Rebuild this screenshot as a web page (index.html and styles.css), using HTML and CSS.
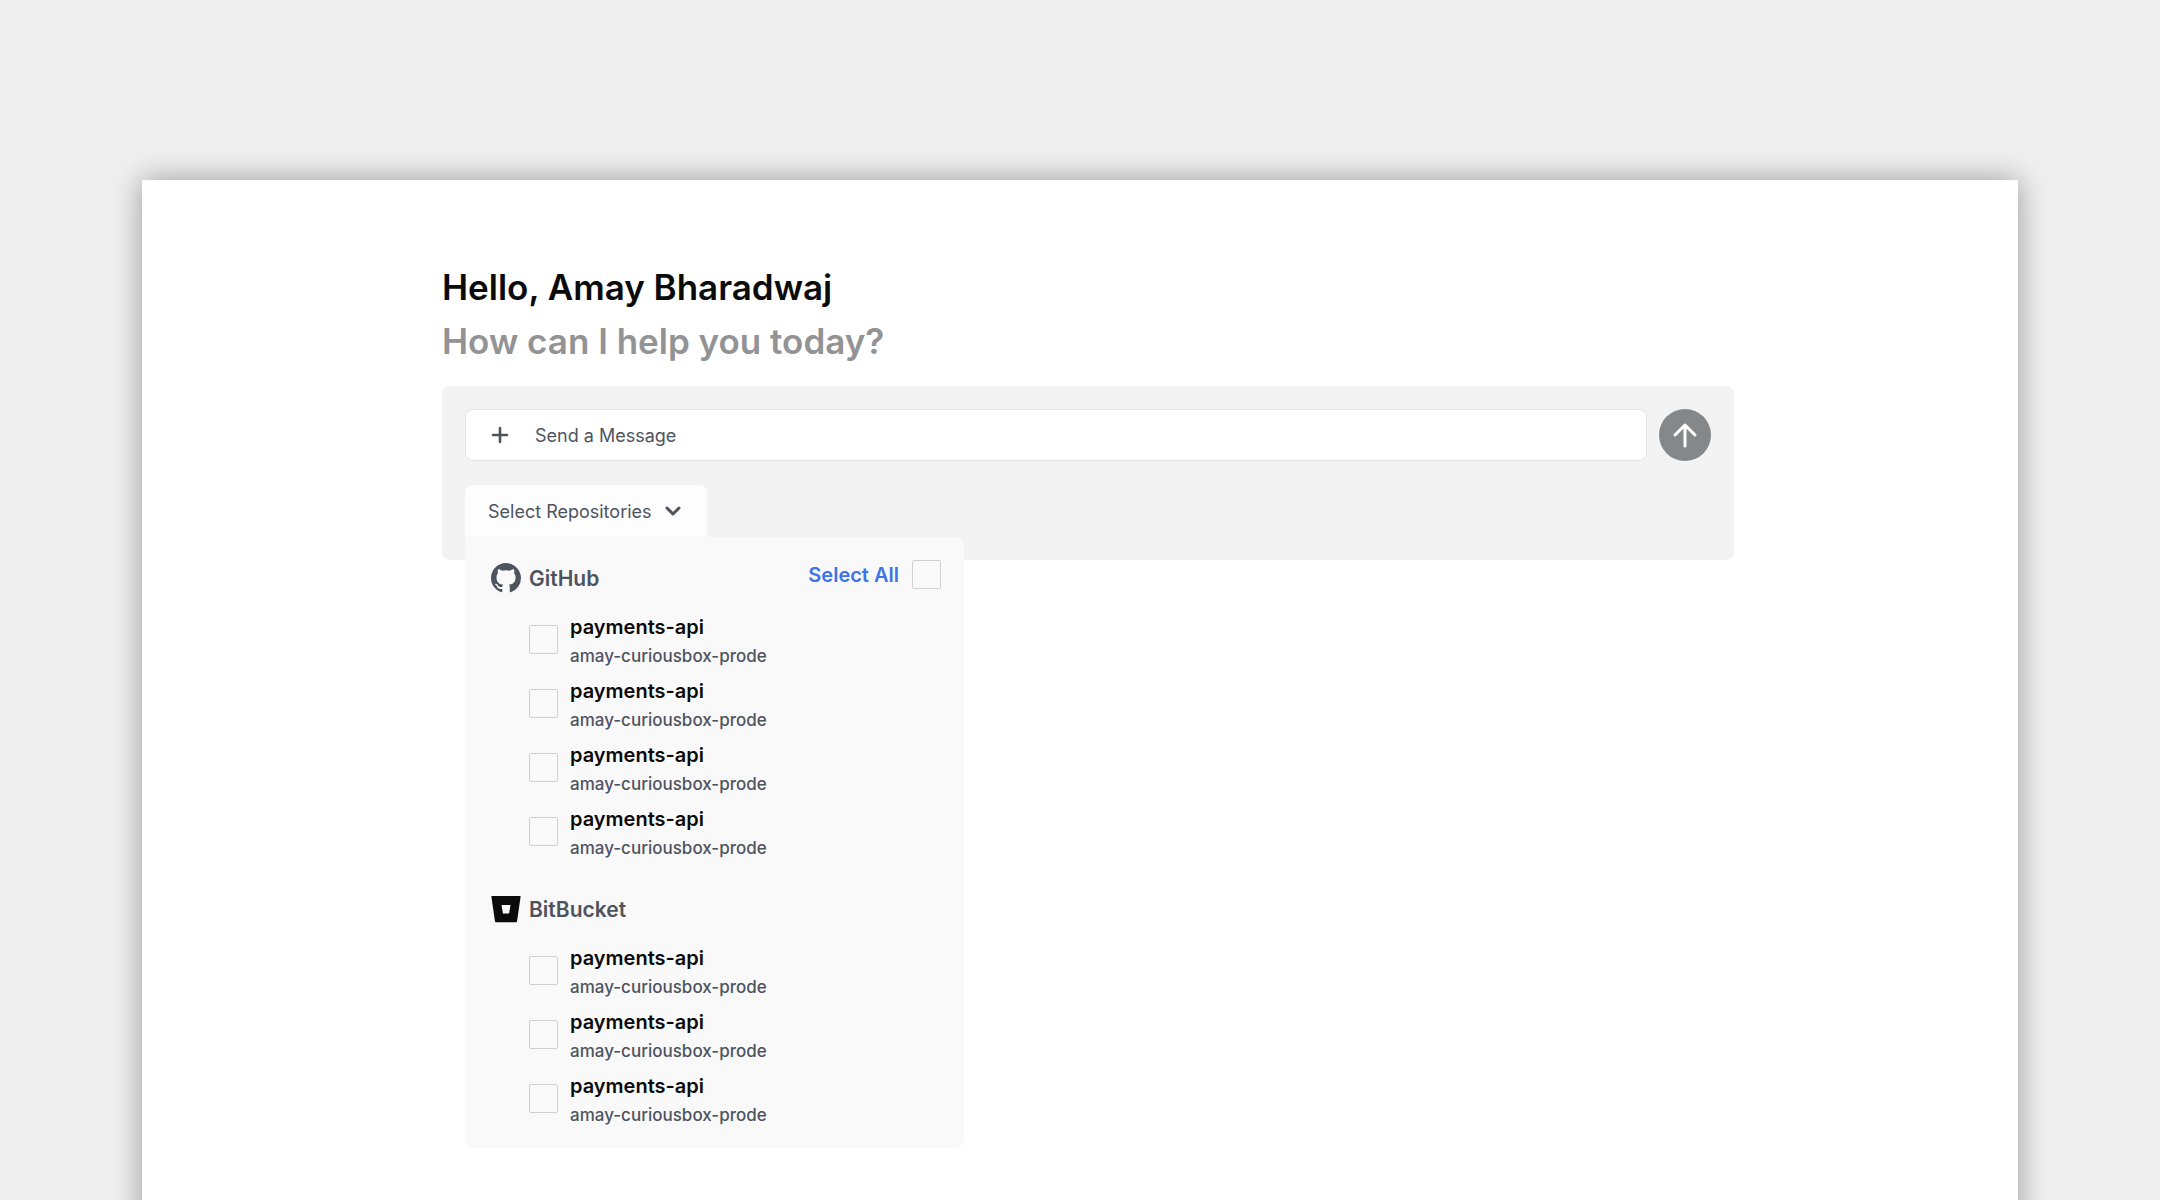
FILE: index.html
```
<!DOCTYPE html>
<html lang="en">
<head>
    <meta charset="UTF-8">
    <meta name="viewport" content="width=device-width, initial-scale=1.0">
    <title>Chat</title>
    <link rel="stylesheet" href="styles.css">
</head>
<body>

    <div class="page">
    <main class="sheet">
        <!-- Greeting -->
        <h1 class="greeting">Hello, Amay Bharadwaj</h1>
        <p class="question">How can I help you today?</p>

        <form class="composer">
            <!-- Message row -->
            <div class="message-row">
                <div class="message-box">
                    <button class="add-button" type="button" aria-label="Add attachment">
                        <svg width="18" height="18" viewBox="0 0 18 18" fill="none" stroke="currentColor" stroke-width="2.6" stroke-linecap="round">
                            <path d="M9 2v14M2 9h14"/>
                        </svg>
                    </button>
                    <input class="message-input" type="text" placeholder="Send a Message" aria-label="Send a Message">
                </div>
                <button class="send-button" type="submit" aria-label="Send">
                    <svg width="26" height="26" viewBox="0 0 26 26" fill="none" stroke="currentColor" stroke-width="3" stroke-linecap="round" stroke-linejoin="round">
                        <path d="M13 24V3M3 13L13 3l10 10"/>
                    </svg>
                </button>
            </div>

            <!-- Repository picker -->
            <div class="picker">
                <button class="picker-toggle" type="button" aria-expanded="true" aria-controls="repo-menu">
                    Select Repositories
                    <svg width="16" height="10" viewBox="0 0 16 10" fill="none" stroke="currentColor" stroke-width="3" stroke-linecap="round" stroke-linejoin="round">
                        <path d="M2 2l6 6 6-6"/>
                    </svg>
                </button>

                <div class="repo-menu" id="repo-menu">
                    <section class="repo-group">
                        <div class="group-header">
                            <h2 class="group-name">
                                <svg width="30" height="30" viewBox="0 0 16 16" fill="currentColor">
                                    <path d="M8 0C3.580 0 0 3.580 0 8c0 3.540 2.290 6.530 5.470 7.590.4.070.55-.17.55-.38 0-.19-.01-.82-.01-1.490-2.010.37-2.530-.49-2.690-.94-.09-.23-.48-.94-.82-1.130-.28-.15-.68-.52-.01-.53.63-.01 1.080.58 1.230.82.72 1.210 1.870.87 2.330.66.07-.52.28-.87.51-1.070-1.780-.2-3.640-.89-3.640-3.950 0-.87.31-1.590.82-2.150-.08-.2-.36-1.020.08-2.120 0 0 .67-.21 2.200.82.64-.18 1.320-.27 2-.27s1.360.09 2 .27c1.530-1.040 2.200-.82 2.200-.82.44 1.100.16 1.920.08 2.120.51.56.82 1.270.82 2.150 0 3.070-1.870 3.750-3.650 3.950.29.25.54.73.54 1.480 0 1.070-.01 1.930-.01 2.200 0 .21.15.46.55.38A8.010 8.010 0 0 0 16 8c0-4.420-3.580-8-8-8z"/>
                                </svg>
                                GitHub
                            </h2>
                            <label class="select-all">Select All <input class="checkbox" type="checkbox"></label>
                        </div>
                        <div class="repo-list">
                            <label class="repo">
                                <input class="checkbox" type="checkbox">
                                <span class="repo-text"><span class="repo-name">payments-api</span><span class="repo-owner">amay-curiousbox-prode</span></span>
                            </label>
                            <label class="repo">
                                <input class="checkbox" type="checkbox">
                                <span class="repo-text"><span class="repo-name">payments-api</span><span class="repo-owner">amay-curiousbox-prode</span></span>
                            </label>
                            <label class="repo">
                                <input class="checkbox" type="checkbox">
                                <span class="repo-text"><span class="repo-name">payments-api</span><span class="repo-owner">amay-curiousbox-prode</span></span>
                            </label>
                            <label class="repo">
                                <input class="checkbox" type="checkbox">
                                <span class="repo-text"><span class="repo-name">payments-api</span><span class="repo-owner">amay-curiousbox-prode</span></span>
                            </label>
                        </div>
                    </section>

                    <section class="repo-group">
                        <div class="group-header">
                            <h2 class="group-name">
                                <svg width="30" height="30" viewBox="0 0 30 30">
                                    <path fill="#0b0b0c" fill-rule="evenodd" d="M1 2h28a.6.6 0 0 1 .6.7L26 27.400a1 1 0 0 1-1 .8H5a1 1 0 0 1-1-.8L.4 2.700A.6.6 0 0 1 1 2zm9.500 9l1.400 8.500h6.200L19.500 11z"/>
                                </svg>
                                BitBucket
                            </h2>
                        </div>
                        <div class="repo-list">
                            <label class="repo">
                                <input class="checkbox" type="checkbox">
                                <span class="repo-text"><span class="repo-name">payments-api</span><span class="repo-owner">amay-curiousbox-prode</span></span>
                            </label>
                            <label class="repo">
                                <input class="checkbox" type="checkbox">
                                <span class="repo-text"><span class="repo-name">payments-api</span><span class="repo-owner">amay-curiousbox-prode</span></span>
                            </label>
                            <label class="repo">
                                <input class="checkbox" type="checkbox">
                                <span class="repo-text"><span class="repo-name">payments-api</span><span class="repo-owner">amay-curiousbox-prode</span></span>
                            </label>
                        </div>
                    </section>
                </div>
            </div>
        </form>
    </main>
    </div>

</body>
</html>
```
FILE: styles.css
```
* {
    box-sizing: border-box;
}

body {
    margin: 0;
    background: #efefef;
    color: #4e545e;
    font-family: Inter, "Liberation Sans", sans-serif;
    font-size: 18px;
}

button,
input {
    font: inherit;
    color: inherit;
}

button {
    border: 0;
    padding: 0;
    background: none;
    cursor: pointer;
}

.page {
    min-height: 100vh;
    display: flex;
    flex-direction: column;
    overflow: hidden;
}

/* The sheet runs off the bottom edge of the page */
.sheet {
    flex: 1;
    margin: 180px 142px -40px;
    padding: 80px 284px 0 300px;
    background: #fff;
    box-shadow: 0 0 28px rgba(0, 0, 0, 0.36);
}

/* Greeting */
.greeting,
.question {
    margin: 0;
    font-size: 35px;
    font-weight: 600;
    line-height: 54px;
}

.greeting {
    color: #0b0b0c;
}

.question {
    color: #929395;
}

/* Composer */
.composer {
    margin-top: 18px;
    padding: 23px;
    display: flex;
    flex-direction: column;
    gap: 24px;
    border-radius: 8px;
    background: #f3f3f3;
}

.message-row {
    display: flex;
    gap: 12px;
}

.message-box {
    flex: 1;
    height: 52px;
    display: flex;
    align-items: center;
    gap: 26px;
    padding-left: 25px;
    border: 1px solid #e4e4e4;
    border-radius: 8px;
    background: #fff;
}

.add-button {
    display: flex;
}

.message-input {
    flex: 1;
    height: 100%;
    padding: 0;
    border: 0;
    outline: 0;
    background: none;
}

.message-input::placeholder {
    color: #4e545e;
    opacity: 1;
}

.send-button {
    width: 52px;
    height: 52px;
    display: flex;
    align-items: center;
    justify-content: center;
    border-radius: 50%;
    background: #85888b;
    color: #fff;
}

/* Repository picker */
.picker {
    position: relative;
    display: flex;
}

.picker-toggle {
    height: 52px;
    display: flex;
    align-items: center;
    gap: 13px;
    padding: 0 26px 0 23px;
    border-radius: 8px 8px 0 0;
    background: #fdfdfd;
}

.repo-menu {
    position: absolute;
    top: 100%;
    left: 0;
    width: 499px;
    padding: 23px 23px 18px 26px;
    display: flex;
    flex-direction: column;
    gap: 28px;
    border-radius: 0 8px 8px 8px;
    background: #f9f9f9;
}

.group-header {
    height: 36px;
    display: flex;
    justify-content: space-between;
    align-items: flex-start;
}

.group-name {
    height: 36px;
    margin: 0;
    display: flex;
    align-items: center;
    gap: 8px;
    font-size: 21px;
    font-weight: 600;
}

.select-all {
    display: flex;
    align-items: center;
    gap: 13px;
    color: #3f73ea;
    font-size: 20px;
    font-weight: 600;
}

.repo-list {
    margin: 17px 0 0 38px;
    display: flex;
    flex-direction: column;
    gap: 6px;
}

.repo {
    display: flex;
    align-items: flex-start;
    gap: 12px;
}

.repo .checkbox {
    margin-top: 12px;
}

.repo-text {
    display: flex;
    flex-direction: column;
}

.repo-name {
    color: #0b0b0c;
    font-size: 20px;
    font-weight: 600;
    line-height: 28px;
}

.repo-owner {
    font-size: 17px;
    font-weight: 500;
    line-height: 30px;
}

.checkbox {
    appearance: none;
    width: 29px;
    height: 29px;
    margin: 0;
    border: 1px solid #cfcfcf;
    border-radius: 2px;
    background: #f9f9f9;
}

.checkbox:checked {
    border-color: #3f73ea;
    background: #3f73ea;
}
```
